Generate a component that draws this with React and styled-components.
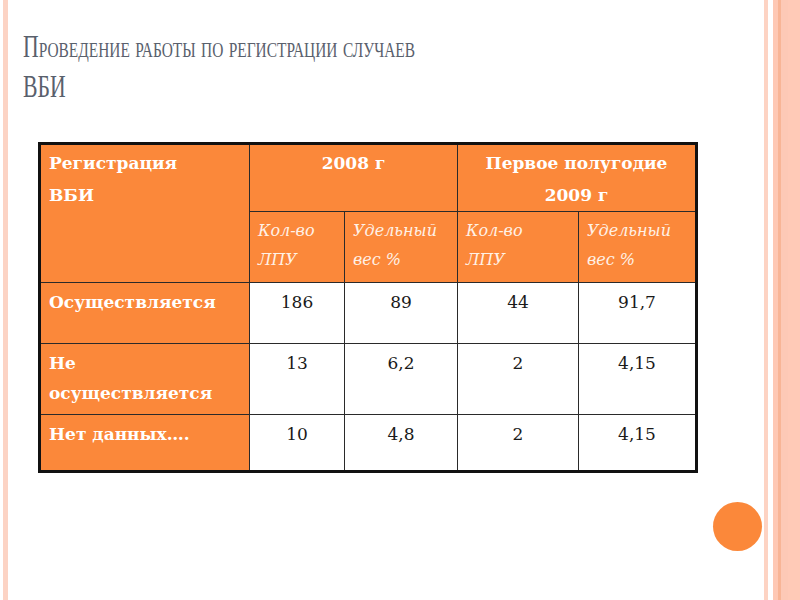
import React from "react";
import styled, { createGlobalStyle } from "styled-components";

const GlobalStyle = createGlobalStyle`
  html, body {
    margin: 0;
    padding: 0;
    background: #ffffff;
  }
  #root {
    width: 800px;
    height: 600px;
  }
`;

const ORANGE = "#fb883a";

const Slide = styled.div`
  box-sizing: border-box;
  width: 800px;
  height: 600px;
  overflow: hidden;
  display: flex;
  flex-direction: column;
  padding: 27px 0 0 23px;
  background: linear-gradient(
    to right,
    #ffffff 0px,
    #ffffff 3px,
    #fcd3c4 3px,
    #fcd3c4 8px,
    #ffffff 8px,
    #ffffff 764px,
    #fdd3c3 764px,
    #fdd3c3 768px,
    #ffffff 768px,
    #ffffff 773px,
    #fec8b4 773px,
    #fec8b4 778px,
    #f8b596 778px,
    #f8b596 781px,
    #fdc9b6 781px,
    #fdc9b6 788px,
    #ffcab7 788px,
    #ffcab7 800px
  );
`;

const Title = styled.h1`
  margin: 0;
  font-family: "Liberation Serif", "DejaVu Serif", serif;
  font-weight: normal;
  font-size: 31px;
  line-height: 40px;
  color: #59606c;
  font-variant: small-caps;
  transform: scaleX(0.70);
  transform-origin: left top;
  white-space: nowrap;
`;

const TableWrap = styled.div`
  margin: 35px 0 0 15px;
  width: 657px;
`;

const Grid = styled.table`
  width: 657px;
  border-collapse: collapse;
  table-layout: fixed;
  border: 3px solid #111;
  font-family: "DejaVu Serif", "Liberation Serif", serif;
`;

const Head = styled.th`
  background: ${ORANGE};
  color: #ffffff;
  font-weight: bold;
  font-size: 17px;
  line-height: 32px;
  text-align: ${(p) => (p.$center ? "center" : "left")};
  vertical-align: top;
  padding: 2px 8px 0 8px;
  border: 1px solid #2a2a2a;
  height: ${(p) => p.$h || "auto"};
  box-sizing: border-box;
`;

const Sub = styled.th`
  background: ${ORANGE};
  color: #fff1e6;
  font-weight: normal;
  font-style: italic;
  font-size: 16px;
  line-height: 29px;
  text-align: left;
  vertical-align: top;
  padding: 4px 8px 0 8px;
  border: 1px solid #2a2a2a;
  height: 71px;
  box-sizing: border-box;
`;

const Label = styled.th`
  background: ${ORANGE};
  color: #ffffff;
  font-weight: bold;
  font-size: 17px;
  line-height: 30px;
  text-align: left;
  vertical-align: top;
  padding: 4px 8px 0 8px;
  border: 1px solid #2a2a2a;
  height: ${(p) => p.$h};
  box-sizing: border-box;
`;

const Cell = styled.td`
  background: #ffffff;
  color: #1a1a1a;
  font-size: 17px;
  line-height: 30px;
  text-align: center;
  vertical-align: top;
  padding: 4px 8px 0 8px;
  border: 1px solid #2a2a2a;
`;

const Footer = styled.div`
  display: flex;
  justify-content: flex-end;
  padding: 29px 38px 0 0;
`;

const Dot = styled.div`
  width: 49px;
  height: 49px;
  border-radius: 50%;
  background: ${ORANGE};
`;

const rows = [
  { label: "Осуществляется", h: "61px", values: ["186", "89", "44", "91,7"] },
  { label: "Не осуществляется", h: "71px", values: ["13", "6,2", "2", "4,15"] },
  { label: "Нет данных….", h: "57px", values: ["10", "4,8", "2", "4,15"] },
];

export default function App() {
  return (
    <>
      <GlobalStyle />
      <Slide>
        <Title>
          Проведение работы по регистрации случаев
          <br />
          ВБИ
        </Title>
        <TableWrap>
          <Grid>
            <colgroup>
              <col style={{ width: "210px" }} />
              <col style={{ width: "95px" }} />
              <col style={{ width: "113px" }} />
              <col style={{ width: "121px" }} />
              <col style={{ width: "118px" }} />
            </colgroup>
            <thead>
              <tr>
                <Head rowSpan={2}>
                  Регистрация
                  <br />
                  ВБИ
                </Head>
                <Head colSpan={2} $center $h="68px">
                  2008 г
                </Head>
                <Head colSpan={2} $center $h="68px">
                  Первое полугодие
                  <br />
                  2009 г
                </Head>
              </tr>
              <tr>
                <Sub>
                  Кол-во
                  <br />
                  ЛПУ
                </Sub>
                <Sub>
                  Удельный
                  <br />
                  вес %
                </Sub>
                <Sub>
                  Кол-во
                  <br />
                  ЛПУ
                </Sub>
                <Sub>
                  Удельный
                  <br />
                  вес %
                </Sub>
              </tr>
            </thead>
            <tbody>
              {rows.map((r) => (
                <tr key={r.label}>
                  <Label $h={r.h}>{r.label}</Label>
                  {r.values.map((v, i) => (
                    <Cell key={i}>{v}</Cell>
                  ))}
                </tr>
              ))}
            </tbody>
          </Grid>
        </TableWrap>
        <Footer>
          <Dot />
        </Footer>
      </Slide>
    </>
  );
}
